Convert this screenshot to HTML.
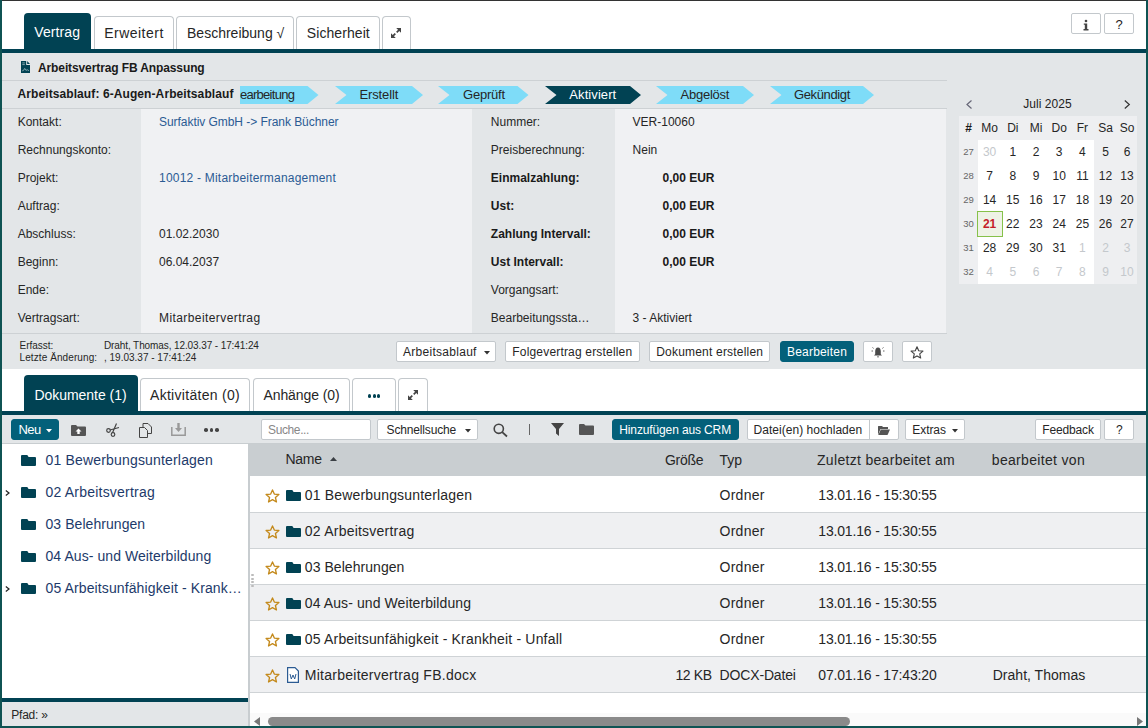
<!DOCTYPE html><html><head><meta charset="utf-8"><style>*{margin:0;padding:0;box-sizing:border-box}
html,body{width:1148px;height:728px;overflow:hidden;background:#fff;font-family:"Liberation Sans", sans-serif}
body>div{position:absolute}
.t{white-space:nowrap}
svg{position:absolute;overflow:visible}
</style></head><body>
<div style="left:0px;top:0px;width:1148px;height:728px;background:#fff"></div>
<div style="left:24px;top:13px;width:67px;height:36px;background:#014253;border-radius:4px 4px 0 0"></div>
<div class="t" style="left:34.20px;top:25.15px;font-size:14px;line-height:14px;color:#fff;font-weight:normal;letter-spacing:0.123px;">Vertrag</div>
<div style="left:94px;top:16px;width:80px;height:33px;background:#fff;border:1px solid #c3c8cc;border-bottom:none;border-radius:4px 4px 0 0"></div>
<div class="t" style="left:104.20px;top:26.15px;font-size:14px;line-height:14px;color:#262626;font-weight:normal;letter-spacing:0.485px;">Erweitert</div>
<div style="left:176px;top:16px;width:118px;height:33px;background:#fff;border:1px solid #c3c8cc;border-bottom:none;border-radius:4px 4px 0 0"></div>
<div class="t" style="left:187.00px;top:26.15px;font-size:14px;line-height:14px;color:#262626;font-weight:normal;letter-spacing:0.008px;">Beschreibung √</div>
<div style="left:296px;top:16px;width:84px;height:33px;background:#fff;border:1px solid #c3c8cc;border-bottom:none;border-radius:4px 4px 0 0"></div>
<div class="t" style="left:306.80px;top:26.15px;font-size:14px;line-height:14px;color:#262626;font-weight:normal;letter-spacing:0.075px;">Sicherheit</div>
<div style="left:382px;top:16px;width:29px;height:33px;background:#fff;border:1px solid #c3c8cc;border-bottom:none;border-radius:4px 4px 0 0"></div>
<svg style="left:391px;top:28px" width="10" height="10" viewBox="0 0 10 10"><path d="M1.8 8.2 L4.3 5.7 M5.7 4.3 L8.2 1.8" stroke="#444" stroke-width="1.7"/><path d="M0 10 L0 5.2 L4.8 10 Z M10 0 L10 4.8 L5.2 0 Z" fill="#444"/></svg>
<div style="left:1071px;top:13px;width:30px;height:21px;background:#fff;border:1px solid #c3c8cc;border-radius:2px"></div>
<svg style="left:1083px;top:19px" width="6" height="12" viewBox="0 0 6 12"><circle cx="3" cy="2" r="1.3" fill="#444"/><path d="M0.8 4.5 H4.2 V10 H5.5 V11.5 H0.5 V10 H1.8 V5.7 H0.8 Z" fill="#444"/></svg>
<div style="left:1104px;top:13px;width:30px;height:21px;background:#fff;border:1px solid #c3c8cc;border-radius:2px"></div>
<div class="t" style="left:1115.50px;top:17.50px;font-size:13px;line-height:13px;color:#222;font-weight:normal;">?</div>
<div style="left:2px;top:49px;width:1144px;height:4px;background:#014253"></div>
<div style="left:2px;top:53px;width:1144px;height:316px;background:#e3e6e8"></div>
<svg style="left:21px;top:61px" width="9" height="12" viewBox="0 0 9 12"><path d="M0 0 H5.2 V3.6 Q5.2 4.1 5.7 4.1 H9 V12 H0 Z" fill="#014253"/><path d="M6.2 0 L9 3.1 H6.2 Z" fill="#014253"/><path d="M1.3 1.9 H3.8 M1.3 3.6 H3.8" stroke="#8fb0b8" stroke-width="0.9"/><path d="M1.2 9.9 L2.6 9.3 L3.7 7.4 L4.9 9.3 L6.4 8.8 L7.9 9.7" stroke="#8fb0b8" stroke-width="0.9" fill="none"/></svg>
<div class="t" style="left:38.00px;top:61.84px;font-size:12px;line-height:12px;color:#1a1a1a;font-weight:bold;letter-spacing:-0.112px;">Arbeitsvertrag FB Anpassung</div>
<div style="left:2px;top:80px;width:945px;height:1px;background:#cdd1d4"></div>
<svg style="left:0;top:0" width="1148" height="728"><polygon points="240,86 307.5,86 318.5,95 307.5,104 240,104" fill="#7edcf8"/></svg>
<div class="t" style="left:232.00px;top:88.00px;font-size:13px;line-height:13px;color:#262626;font-weight:normal;letter-spacing:-0.719px;">Bearbeitung</div>
<svg style="left:0;top:0" width="1148" height="728"><polygon points="335,86 412,86 423,95 412,104 335,104 346.5,95" fill="#7edcf8"/></svg>
<div class="t" style="left:359.50px;top:88.00px;font-size:13px;line-height:13px;color:#262626;font-weight:normal;letter-spacing:-0.129px;">Erstellt</div>
<svg style="left:0;top:0" width="1148" height="728"><polygon points="438,86 517.5,86 528.5,95 517.5,104 438,104 449.5,95" fill="#7edcf8"/></svg>
<div class="t" style="left:463.00px;top:88.00px;font-size:13px;line-height:13px;color:#262626;font-weight:normal;letter-spacing:-0.222px;">Geprüft</div>
<svg style="left:0;top:0" width="1148" height="728"><polygon points="545,86 630,86 641,95 630,104 545,104 556.5,95" fill="#014253"/></svg>
<div class="t" style="left:569.30px;top:88.00px;font-size:13px;line-height:13px;color:#fff;font-weight:normal;letter-spacing:0.086px;">Aktiviert</div>
<svg style="left:0;top:0" width="1148" height="728"><polygon points="656,86 743,86 754,95 743,104 656,104 667.5,95" fill="#7edcf8"/></svg>
<div class="t" style="left:680.50px;top:88.00px;font-size:13px;line-height:13px;color:#262626;font-weight:normal;letter-spacing:-0.236px;">Abgelöst</div>
<svg style="left:0;top:0" width="1148" height="728"><polygon points="770,86 863,86 874,95 863,104 770,104 781.5,95" fill="#7edcf8"/></svg>
<div class="t" style="left:793.90px;top:88.00px;font-size:13px;line-height:13px;color:#262626;font-weight:normal;letter-spacing:-0.351px;">Gekündigt</div>
<div style="left:2px;top:82px;width:238px;height:24px;background:#e3e6e8"></div>
<div class="t" style="left:17.50px;top:88.24px;font-size:12px;line-height:12px;color:#1a1a1a;font-weight:bold;letter-spacing:0.092px;">Arbeitsablauf: 6-Augen-Arbeitsablauf</div>
<div style="left:2px;top:108px;width:945px;height:1px;background:#cdd1d4"></div>
<div style="left:141px;top:109px;width:331px;height:224px;background:#f0f1f3"></div>
<div style="left:615px;top:109px;width:331px;height:224px;background:#f0f1f3"></div>
<div style="left:2px;top:333px;width:945px;height:1px;background:#cdd1d4"></div>
<div class="t" style="left:17.70px;top:115.84px;font-size:12px;line-height:12px;color:#262626;font-weight:normal;">Kontakt:</div>
<div class="t" style="left:17.70px;top:143.84px;font-size:12px;line-height:12px;color:#262626;font-weight:normal;">Rechnungskonto:</div>
<div class="t" style="left:17.70px;top:171.84px;font-size:12px;line-height:12px;color:#262626;font-weight:normal;">Projekt:</div>
<div class="t" style="left:17.70px;top:199.84px;font-size:12px;line-height:12px;color:#262626;font-weight:normal;">Auftrag:</div>
<div class="t" style="left:17.70px;top:227.84px;font-size:12px;line-height:12px;color:#262626;font-weight:normal;">Abschluss:</div>
<div class="t" style="left:17.70px;top:255.84px;font-size:12px;line-height:12px;color:#262626;font-weight:normal;">Beginn:</div>
<div class="t" style="left:17.70px;top:283.84px;font-size:12px;line-height:12px;color:#262626;font-weight:normal;">Ende:</div>
<div class="t" style="left:17.70px;top:311.84px;font-size:12px;line-height:12px;color:#262626;font-weight:normal;">Vertragsart:</div>
<div class="t" style="left:159.00px;top:115.84px;font-size:12px;line-height:12px;color:#2b5b93;font-weight:normal;letter-spacing:-0.050px;">Surfaktiv GmbH -&gt; Frank Büchner</div>
<div class="t" style="left:159.00px;top:171.84px;font-size:12px;line-height:12px;color:#2b5b93;font-weight:normal;letter-spacing:0.215px;">10012 - Mitarbeitermanagement</div>
<div class="t" style="left:159.00px;top:227.84px;font-size:12px;line-height:12px;color:#262626;font-weight:normal;">01.02.2030</div>
<div class="t" style="left:159.00px;top:255.84px;font-size:12px;line-height:12px;color:#262626;font-weight:normal;">06.04.2037</div>
<div class="t" style="left:159.00px;top:311.84px;font-size:12px;line-height:12px;color:#262626;font-weight:normal;letter-spacing:0.415px;">Mitarbeitervertrag</div>
<div class="t" style="left:490.80px;top:115.84px;font-size:12px;line-height:12px;color:#262626;font-weight:normal;">Nummer:</div>
<div class="t" style="left:490.80px;top:143.84px;font-size:12px;line-height:12px;color:#262626;font-weight:normal;">Preisberechnung:</div>
<div class="t" style="left:490.80px;top:171.84px;font-size:12px;line-height:12px;color:#1a1a1a;font-weight:bold;">Einmalzahlung:</div>
<div class="t" style="left:490.80px;top:199.84px;font-size:12px;line-height:12px;color:#1a1a1a;font-weight:bold;">Ust:</div>
<div class="t" style="left:490.80px;top:227.84px;font-size:12px;line-height:12px;color:#1a1a1a;font-weight:bold;">Zahlung Intervall:</div>
<div class="t" style="left:490.80px;top:255.84px;font-size:12px;line-height:12px;color:#1a1a1a;font-weight:bold;">Ust Intervall:</div>
<div class="t" style="left:490.80px;top:283.84px;font-size:12px;line-height:12px;color:#262626;font-weight:normal;">Vorgangsart:</div>
<div class="t" style="left:490.80px;top:311.84px;font-size:12px;line-height:12px;color:#262626;font-weight:normal;">Bearbeitungssta…</div>
<div class="t" style="left:632.60px;top:115.84px;font-size:12px;line-height:12px;color:#262626;font-weight:normal;">VER-10060</div>
<div class="t" style="left:632.60px;top:143.84px;font-size:12px;line-height:12px;color:#262626;font-weight:normal;">Nein</div>
<div class="t" style="left:662.50px;top:171.84px;font-size:12px;line-height:12px;color:#1a1a1a;font-weight:bold;">0,00 EUR</div>
<div class="t" style="left:662.50px;top:199.84px;font-size:12px;line-height:12px;color:#1a1a1a;font-weight:bold;">0,00 EUR</div>
<div class="t" style="left:662.50px;top:227.84px;font-size:12px;line-height:12px;color:#1a1a1a;font-weight:bold;">0,00 EUR</div>
<div class="t" style="left:662.50px;top:255.84px;font-size:12px;line-height:12px;color:#1a1a1a;font-weight:bold;">0,00 EUR</div>
<div class="t" style="left:632.60px;top:311.84px;font-size:12px;line-height:12px;color:#262626;font-weight:normal;">3 - Aktiviert</div>
<div class="t" style="left:19.50px;top:340.54px;font-size:10px;line-height:10px;color:#262626;font-weight:normal;">Erfasst:</div>
<div class="t" style="left:19.50px;top:352.54px;font-size:10px;line-height:10px;color:#262626;font-weight:normal;letter-spacing:0.096px;">Letzte Änderung:</div>
<div class="t" style="left:104.00px;top:340.54px;font-size:10px;line-height:10px;color:#262626;font-weight:normal;letter-spacing:-0.101px;">Draht, Thomas, 12.03.37 - 17:41:24</div>
<div class="t" style="left:104.00px;top:352.54px;font-size:10px;line-height:10px;color:#262626;font-weight:normal;">, 19.03.37 - 17:41:24</div>
<div style="left:396px;top:341px;width:100px;height:21px;background:#fff;border:1px solid #c3c8cc;border-radius:2px"></div>
<div class="t" style="left:403.00px;top:345.84px;font-size:12px;line-height:12px;color:#262626;font-weight:normal;letter-spacing:0.281px;">Arbeitsablauf</div>
<svg style="left:483.5px;top:351px" width="6" height="4"><polygon points="0,0 6,0 3.0,3.5" fill="#333"/></svg>
<div style="left:505px;top:341px;width:135px;height:21px;background:#fff;border:1px solid #c3c8cc;border-radius:2px"></div>
<div class="t" style="left:512.30px;top:345.84px;font-size:12px;line-height:12px;color:#262626;font-weight:normal;letter-spacing:0.179px;">Folgevertrag erstellen</div>
<div style="left:649px;top:341px;width:121px;height:21px;background:#fff;border:1px solid #c3c8cc;border-radius:2px"></div>
<div class="t" style="left:656.20px;top:345.84px;font-size:12px;line-height:12px;color:#262626;font-weight:normal;letter-spacing:0.201px;">Dokument erstellen</div>
<div style="left:780px;top:341px;width:74px;height:21px;background:#03607a;border:1px solid #03607a;border-radius:3px"></div>
<div class="t" style="left:787.00px;top:345.84px;font-size:12px;line-height:12px;color:#fff;font-weight:normal;letter-spacing:0.196px;">Bearbeiten</div>
<div style="left:863px;top:341px;width:30px;height:21px;background:#fff;border:1px solid #c3c8cc;border-radius:2px"></div>
<svg style="left:871px;top:346px" width="14" height="13" viewBox="0 0 14 13"><path d="M7 1.5 C5 1.5 4.2 3.2 4.2 5.5 L4.2 8.3 L3 9.6 H11 L9.8 8.3 L9.8 5.5 C9.8 3.2 9 1.5 7 1.5 Z" fill="#4a4a4a"/><path d="M6 10.6 H8 V11.3 H6 Z" fill="#4a4a4a"/><path d="M1.5 1.5 L2.6 2.4 M12.5 1.5 L11.4 2.4 M0.5 5 H2 M12 5 H13.5" stroke="#555" stroke-width="0.9"/></svg>
<div style="left:902px;top:341px;width:30px;height:21px;background:#fff;border:1px solid #c3c8cc;border-radius:2px"></div>
<svg style="left:910px;top:345.5px" width="14" height="13" viewBox="0 0 24 23"><path d="M12 1.5 L15 8.3 L22.5 9 L16.8 14 L18.5 21.3 L12 17.5 L5.5 21.3 L7.2 14 L1.5 9 L9 8.3 Z" fill="none" stroke="#444" stroke-width="2" stroke-linejoin="round"/></svg>
<svg style="left:966px;top:100px" width="7" height="10"><path d="M5.5 0.5 L1 4.5 L5.5 8.5" fill="none" stroke="#667" stroke-width="1.2"/></svg>
<svg style="left:1124px;top:100px" width="7" height="10"><path d="M0.8 0.5 L5.3 4.5 L0.8 8.5" fill="none" stroke="#333" stroke-width="1.2"/></svg>
<div class="t" style="left:1023.30px;top:97.84px;font-size:12px;line-height:12px;color:#222;font-weight:normal;letter-spacing:0.029px;">Juli 2025</div>
<div style="left:959px;top:116px;width:178px;height:168px;background:#eeeff1"></div>
<div style="left:978px;top:140px;width:116px;height:144px;background:#fff"></div>
<div class="t" style="left:938.50px;top:121.54px;font-size:12px;line-height:12px;color:#1a1a1a;font-weight:bold;width:60px;text-align:center;">#</div>
<div class="t" style="left:959.60px;top:121.54px;font-size:12px;line-height:12px;color:#262626;font-weight:normal;width:60px;text-align:center;">Mo</div>
<div class="t" style="left:982.80px;top:121.54px;font-size:12px;line-height:12px;color:#262626;font-weight:normal;width:60px;text-align:center;">Di</div>
<div class="t" style="left:1006.00px;top:121.54px;font-size:12px;line-height:12px;color:#262626;font-weight:normal;width:60px;text-align:center;">Mi</div>
<div class="t" style="left:1029.20px;top:121.54px;font-size:12px;line-height:12px;color:#262626;font-weight:normal;width:60px;text-align:center;">Do</div>
<div class="t" style="left:1052.40px;top:121.54px;font-size:12px;line-height:12px;color:#262626;font-weight:normal;width:60px;text-align:center;">Fr</div>
<div class="t" style="left:1075.50px;top:121.54px;font-size:12px;line-height:12px;color:#262626;font-weight:normal;width:60px;text-align:center;">Sa</div>
<div class="t" style="left:1097.00px;top:121.54px;font-size:12px;line-height:12px;color:#262626;font-weight:normal;width:60px;text-align:center;">So</div>
<div style="left:977px;top:211px;width:26px;height:26px;background:#eef2e6;border:1px solid #86c14a"></div>
<div class="t" style="left:938.50px;top:147.46px;font-size:9.5px;line-height:9.5px;color:#666;font-weight:normal;width:60px;text-align:center;">27</div>
<div class="t" style="left:959.60px;top:145.84px;font-size:12px;line-height:12px;color:#c4c8cc;font-weight:normal;width:60px;text-align:center;">30</div>
<div class="t" style="left:982.80px;top:145.84px;font-size:12px;line-height:12px;color:#262626;font-weight:normal;width:60px;text-align:center;">1</div>
<div class="t" style="left:1006.00px;top:145.84px;font-size:12px;line-height:12px;color:#262626;font-weight:normal;width:60px;text-align:center;">2</div>
<div class="t" style="left:1029.20px;top:145.84px;font-size:12px;line-height:12px;color:#262626;font-weight:normal;width:60px;text-align:center;">3</div>
<div class="t" style="left:1052.40px;top:145.84px;font-size:12px;line-height:12px;color:#262626;font-weight:normal;width:60px;text-align:center;">4</div>
<div class="t" style="left:1075.50px;top:145.84px;font-size:12px;line-height:12px;color:#262626;font-weight:normal;width:60px;text-align:center;">5</div>
<div class="t" style="left:1097.00px;top:145.84px;font-size:12px;line-height:12px;color:#262626;font-weight:normal;width:60px;text-align:center;">6</div>
<div class="t" style="left:938.50px;top:171.46px;font-size:9.5px;line-height:9.5px;color:#666;font-weight:normal;width:60px;text-align:center;">28</div>
<div class="t" style="left:959.60px;top:169.84px;font-size:12px;line-height:12px;color:#262626;font-weight:normal;width:60px;text-align:center;">7</div>
<div class="t" style="left:982.80px;top:169.84px;font-size:12px;line-height:12px;color:#262626;font-weight:normal;width:60px;text-align:center;">8</div>
<div class="t" style="left:1006.00px;top:169.84px;font-size:12px;line-height:12px;color:#262626;font-weight:normal;width:60px;text-align:center;">9</div>
<div class="t" style="left:1029.20px;top:169.84px;font-size:12px;line-height:12px;color:#262626;font-weight:normal;width:60px;text-align:center;">10</div>
<div class="t" style="left:1052.40px;top:169.84px;font-size:12px;line-height:12px;color:#262626;font-weight:normal;width:60px;text-align:center;">11</div>
<div class="t" style="left:1075.50px;top:169.84px;font-size:12px;line-height:12px;color:#262626;font-weight:normal;width:60px;text-align:center;">12</div>
<div class="t" style="left:1097.00px;top:169.84px;font-size:12px;line-height:12px;color:#262626;font-weight:normal;width:60px;text-align:center;">13</div>
<div class="t" style="left:938.50px;top:195.46px;font-size:9.5px;line-height:9.5px;color:#666;font-weight:normal;width:60px;text-align:center;">29</div>
<div class="t" style="left:959.60px;top:193.84px;font-size:12px;line-height:12px;color:#262626;font-weight:normal;width:60px;text-align:center;">14</div>
<div class="t" style="left:982.80px;top:193.84px;font-size:12px;line-height:12px;color:#262626;font-weight:normal;width:60px;text-align:center;">15</div>
<div class="t" style="left:1006.00px;top:193.84px;font-size:12px;line-height:12px;color:#262626;font-weight:normal;width:60px;text-align:center;">16</div>
<div class="t" style="left:1029.20px;top:193.84px;font-size:12px;line-height:12px;color:#262626;font-weight:normal;width:60px;text-align:center;">17</div>
<div class="t" style="left:1052.40px;top:193.84px;font-size:12px;line-height:12px;color:#262626;font-weight:normal;width:60px;text-align:center;">18</div>
<div class="t" style="left:1075.50px;top:193.84px;font-size:12px;line-height:12px;color:#262626;font-weight:normal;width:60px;text-align:center;">19</div>
<div class="t" style="left:1097.00px;top:193.84px;font-size:12px;line-height:12px;color:#262626;font-weight:normal;width:60px;text-align:center;">20</div>
<div class="t" style="left:938.50px;top:219.46px;font-size:9.5px;line-height:9.5px;color:#666;font-weight:normal;width:60px;text-align:center;">30</div>
<div class="t" style="left:959.60px;top:217.84px;font-size:12px;line-height:12px;color:#c41d2a;font-weight:bold;width:60px;text-align:center;">21</div>
<div class="t" style="left:982.80px;top:217.84px;font-size:12px;line-height:12px;color:#262626;font-weight:normal;width:60px;text-align:center;">22</div>
<div class="t" style="left:1006.00px;top:217.84px;font-size:12px;line-height:12px;color:#262626;font-weight:normal;width:60px;text-align:center;">23</div>
<div class="t" style="left:1029.20px;top:217.84px;font-size:12px;line-height:12px;color:#262626;font-weight:normal;width:60px;text-align:center;">24</div>
<div class="t" style="left:1052.40px;top:217.84px;font-size:12px;line-height:12px;color:#262626;font-weight:normal;width:60px;text-align:center;">25</div>
<div class="t" style="left:1075.50px;top:217.84px;font-size:12px;line-height:12px;color:#262626;font-weight:normal;width:60px;text-align:center;">26</div>
<div class="t" style="left:1097.00px;top:217.84px;font-size:12px;line-height:12px;color:#262626;font-weight:normal;width:60px;text-align:center;">27</div>
<div class="t" style="left:938.50px;top:243.46px;font-size:9.5px;line-height:9.5px;color:#666;font-weight:normal;width:60px;text-align:center;">31</div>
<div class="t" style="left:959.60px;top:241.84px;font-size:12px;line-height:12px;color:#262626;font-weight:normal;width:60px;text-align:center;">28</div>
<div class="t" style="left:982.80px;top:241.84px;font-size:12px;line-height:12px;color:#262626;font-weight:normal;width:60px;text-align:center;">29</div>
<div class="t" style="left:1006.00px;top:241.84px;font-size:12px;line-height:12px;color:#262626;font-weight:normal;width:60px;text-align:center;">30</div>
<div class="t" style="left:1029.20px;top:241.84px;font-size:12px;line-height:12px;color:#262626;font-weight:normal;width:60px;text-align:center;">31</div>
<div class="t" style="left:1052.40px;top:241.84px;font-size:12px;line-height:12px;color:#c4c8cc;font-weight:normal;width:60px;text-align:center;">1</div>
<div class="t" style="left:1075.50px;top:241.84px;font-size:12px;line-height:12px;color:#c4c8cc;font-weight:normal;width:60px;text-align:center;">2</div>
<div class="t" style="left:1097.00px;top:241.84px;font-size:12px;line-height:12px;color:#c4c8cc;font-weight:normal;width:60px;text-align:center;">3</div>
<div class="t" style="left:938.50px;top:267.46px;font-size:9.5px;line-height:9.5px;color:#666;font-weight:normal;width:60px;text-align:center;">32</div>
<div class="t" style="left:959.60px;top:265.84px;font-size:12px;line-height:12px;color:#c4c8cc;font-weight:normal;width:60px;text-align:center;">4</div>
<div class="t" style="left:982.80px;top:265.84px;font-size:12px;line-height:12px;color:#c4c8cc;font-weight:normal;width:60px;text-align:center;">5</div>
<div class="t" style="left:1006.00px;top:265.84px;font-size:12px;line-height:12px;color:#c4c8cc;font-weight:normal;width:60px;text-align:center;">6</div>
<div class="t" style="left:1029.20px;top:265.84px;font-size:12px;line-height:12px;color:#c4c8cc;font-weight:normal;width:60px;text-align:center;">7</div>
<div class="t" style="left:1052.40px;top:265.84px;font-size:12px;line-height:12px;color:#c4c8cc;font-weight:normal;width:60px;text-align:center;">8</div>
<div class="t" style="left:1075.50px;top:265.84px;font-size:12px;line-height:12px;color:#c4c8cc;font-weight:normal;width:60px;text-align:center;">9</div>
<div class="t" style="left:1097.00px;top:265.84px;font-size:12px;line-height:12px;color:#c4c8cc;font-weight:normal;width:60px;text-align:center;">10</div>
<div style="left:24px;top:375px;width:114px;height:36px;background:#014253;border-radius:4px 4px 0 0"></div>
<div class="t" style="left:34.50px;top:388.15px;font-size:14px;line-height:14px;color:#fff;font-weight:normal;letter-spacing:-0.046px;">Dokumente (1)</div>
<div style="left:140px;top:378px;width:110px;height:33px;background:#fff;border:1px solid #c3c8cc;border-bottom:none;border-radius:4px 4px 0 0"></div>
<div class="t" style="left:150.00px;top:388.15px;font-size:14px;line-height:14px;color:#262626;font-weight:normal;letter-spacing:0.294px;">Aktivitäten (0)</div>
<div style="left:253px;top:378px;width:97px;height:33px;background:#fff;border:1px solid #c3c8cc;border-bottom:none;border-radius:4px 4px 0 0"></div>
<div class="t" style="left:263.50px;top:388.15px;font-size:14px;line-height:14px;color:#262626;font-weight:normal;letter-spacing:-0.096px;">Anhänge (0)</div>
<div style="left:352px;top:378px;width:44px;height:33px;background:#fff;border:1px solid #c3c8cc;border-bottom:none;border-radius:4px 4px 0 0"></div>
<div style="left:367.9px;top:394.2px;width:3.4px;height:3.4px;background:#014253;border-radius:50%"></div>
<div style="left:372.5px;top:394.2px;width:3.4px;height:3.4px;background:#014253;border-radius:50%"></div>
<div style="left:377.09999999999997px;top:394.2px;width:3.4px;height:3.4px;background:#014253;border-radius:50%"></div>
<div style="left:398px;top:378px;width:30px;height:33px;background:#fff;border:1px solid #c3c8cc;border-bottom:none;border-radius:4px 4px 0 0"></div>
<svg style="left:408px;top:390px" width="10" height="10" viewBox="0 0 10 10"><path d="M1.8 8.2 L4.3 5.7 M5.7 4.3 L8.2 1.8" stroke="#444" stroke-width="1.7"/><path d="M0 10 L0 5.2 L4.8 10 Z M10 0 L10 4.8 L5.2 0 Z" fill="#444"/></svg>
<div style="left:2px;top:411px;width:1144px;height:4px;background:#014253"></div>
<div style="left:2px;top:415px;width:1144px;height:28px;background:#e3e6e8"></div>
<div style="left:2px;top:443px;width:1144px;height:1px;background:#c8cdd0"></div>
<div style="left:11px;top:419px;width:48px;height:21px;background:#03607a;border:1px solid #03607a;border-radius:3px"></div>
<div class="t" style="left:18.50px;top:423.00px;font-size:13px;line-height:13px;color:#fff;font-weight:normal;letter-spacing:-0.616px;">Neu</div>
<svg style="left:45.5px;top:429px" width="6" height="4"><polygon points="0,0 6,0 3.0,3.5" fill="#fff"/></svg>
<svg style="left:71px;top:425px" width="15" height="11" viewBox="0 0 15 11"><path d="M0 1 Q0 0 1 0 H5 L6.5 1.5 H14 Q15 1.5 15 2.5 V10 Q15 11 14 11 H1 Q0 11 0 10 Z" fill="#555"/><path d="M7.5 3.5 L10.5 6.5 H8.7 V9 H6.3 V6.5 H4.5 Z" fill="#fff"/></svg>
<svg style="left:106px;top:423px" width="14" height="14" viewBox="0 0 14 14"><circle cx="2.5" cy="7.5" r="1.8" fill="none" stroke="#444" stroke-width="1.2"/><circle cx="7" cy="11.5" r="1.8" fill="none" stroke="#444" stroke-width="1.2"/><path d="M4 7 L13 4.5 M6.5 9.7 L10.5 0.5" stroke="#444" stroke-width="1.2"/></svg>
<svg style="left:139px;top:423px" width="13" height="15" viewBox="0 0 13 15"><path d="M4 0.5 H9 L12.5 4 V10.5 H4 Z" fill="#e3e6e8" stroke="#444" stroke-width="1"/><path d="M0.5 4.5 H5.5 L8.5 7.5 V14.5 H0.5 Z" fill="#e3e6e8" stroke="#444" stroke-width="1"/></svg>
<svg style="left:171px;top:423px" width="15" height="13" viewBox="0 0 15 13"><path d="M0.8 4 V12.2 H14.2 V4" fill="none" stroke="#999" stroke-width="1.5"/><path d="M6.3 0 H8.7 V5 H11 L7.5 9 L4 5 H6.3 Z" fill="#999"/></svg>
<div style="left:204.0px;top:428px;width:3.5px;height:3.5px;background:#444;border-radius:50%"></div>
<div style="left:209.5px;top:428px;width:3.5px;height:3.5px;background:#444;border-radius:50%"></div>
<div style="left:215.0px;top:428px;width:3.5px;height:3.5px;background:#444;border-radius:50%"></div>
<div style="left:261px;top:419px;width:110px;height:21px;background:#fff;border:1px solid #c3c8cc;border-radius:2px"></div>
<div class="t" style="left:268.00px;top:424.34px;font-size:12px;line-height:12px;color:#888;font-weight:normal;letter-spacing:-0.378px;">Suche...</div>
<div style="left:377px;top:419px;width:101px;height:21px;background:#fff;border:1px solid #c3c8cc;border-radius:2px"></div>
<div class="t" style="left:386.60px;top:424.34px;font-size:12px;line-height:12px;color:#262626;font-weight:normal;letter-spacing:-0.165px;">Schnellsuche</div>
<svg style="left:464.8px;top:429px" width="6" height="4"><polygon points="0,0 6,0 3.0,3.5" fill="#333"/></svg>
<svg style="left:493px;top:423px" width="15" height="14" viewBox="0 0 15 14"><circle cx="5.8" cy="5.8" r="4.6" fill="none" stroke="#444" stroke-width="1.6"/><path d="M9.2 9.2 L14 13.5" stroke="#444" stroke-width="1.8"/></svg>
<div style="left:529px;top:424px;width:1px;height:11px;background:#666"></div>
<svg style="left:551px;top:423px" width="13" height="13" viewBox="0 0 13 13"><path d="M0 0 H13 L8 6 V13 L5 10.5 V6 Z" fill="#444"/></svg>
<svg style="left:579px;top:424px" width="15" height="11" viewBox="0 0 15 11"><path d="M0 1 Q0 0 1 0 H5 L6.5 1.5 H14 Q15 1.5 15 2.5 V10 Q15 11 14 11 H1 Q0 11 0 10 Z" fill="#555"/></svg>
<div style="left:612px;top:419px;width:127px;height:21px;background:#03607a;border:1px solid #03607a;border-radius:3px"></div>
<div class="t" style="left:619.30px;top:424.34px;font-size:12px;line-height:12px;color:#fff;font-weight:normal;letter-spacing:-0.131px;">Hinzufügen aus CRM</div>
<div style="left:747px;top:419px;width:152px;height:21px;background:#fff;border:1px solid #c3c8cc;border-radius:2px"></div>
<div style="left:869px;top:420px;width:1px;height:19px;background:#c3c8cc"></div>
<div class="t" style="left:753.60px;top:424.34px;font-size:12px;line-height:12px;color:#262626;font-weight:normal;letter-spacing:0.028px;">Datei(en) hochladen</div>
<svg style="left:878px;top:426px" width="12" height="9" viewBox="0 0 12 9"><path d="M0 0.5 Q0 0 0.5 0 H4 L5 1 H10 V3 H2.5 L0 9 Z" fill="#555"/><path d="M2.8 3.5 H12 L9.5 9 H0.3 Z" fill="#555"/></svg>
<div style="left:905px;top:419px;width:60px;height:21px;background:#fff;border:1px solid #c3c8cc;border-radius:2px"></div>
<div class="t" style="left:912.30px;top:424.34px;font-size:12px;line-height:12px;color:#262626;font-weight:normal;letter-spacing:-0.085px;">Extras</div>
<svg style="left:952.4px;top:429px" width="6" height="4"><polygon points="0,0 6,0 3.0,3.5" fill="#333"/></svg>
<div style="left:1035px;top:419px;width:66px;height:21px;background:#fff;border:1px solid #c3c8cc;border-radius:2px"></div>
<div class="t" style="left:1042.30px;top:424.34px;font-size:12px;line-height:12px;color:#262626;font-weight:normal;letter-spacing:-0.150px;">Feedback</div>
<div style="left:1104px;top:419px;width:30px;height:21px;background:#fff;border:1px solid #c3c8cc;border-radius:2px"></div>
<div class="t" style="left:1116.00px;top:424.34px;font-size:12px;line-height:12px;color:#262626;font-weight:normal;">?</div>
<div style="left:2px;top:444px;width:246px;height:254px;background:#fff"></div>
<svg style="left:21px;top:454.7px" width="15" height="11" viewBox="0 0 15 11" preserveAspectRatio="none"><path d="M0 1 Q0 0 1 0 H6.3 L7.6 2 H14 Q15 2 15 3 V10 Q15 11 14 11 H1 Q0 11 0 10 Z" fill="#014253"/></svg>
<div class="t" style="left:45.50px;top:453.35px;font-size:14px;line-height:14px;color:#1d3a6a;font-weight:normal;letter-spacing:0.176px;">01 Bewerbungsunterlagen</div>
<svg style="left:21px;top:486.7px" width="15" height="11" viewBox="0 0 15 11" preserveAspectRatio="none"><path d="M0 1 Q0 0 1 0 H6.3 L7.6 2 H14 Q15 2 15 3 V10 Q15 11 14 11 H1 Q0 11 0 10 Z" fill="#014253"/></svg>
<div class="t" style="left:45.50px;top:485.35px;font-size:14px;line-height:14px;color:#1d3a6a;font-weight:normal;letter-spacing:0.211px;">02 Arbeitsvertrag</div>
<svg style="left:5px;top:489.5px" width="5" height="6"><path d="M0.8 0.5 L4 3 L0.8 5.5" fill="none" stroke="#222" stroke-width="1.2"/></svg>
<svg style="left:21px;top:518.7px" width="15" height="11" viewBox="0 0 15 11" preserveAspectRatio="none"><path d="M0 1 Q0 0 1 0 H6.3 L7.6 2 H14 Q15 2 15 3 V10 Q15 11 14 11 H1 Q0 11 0 10 Z" fill="#014253"/></svg>
<div class="t" style="left:45.50px;top:517.35px;font-size:14px;line-height:14px;color:#1d3a6a;font-weight:normal;letter-spacing:0.060px;">03 Belehrungen</div>
<svg style="left:21px;top:550.7px" width="15" height="11" viewBox="0 0 15 11" preserveAspectRatio="none"><path d="M0 1 Q0 0 1 0 H6.3 L7.6 2 H14 Q15 2 15 3 V10 Q15 11 14 11 H1 Q0 11 0 10 Z" fill="#014253"/></svg>
<div class="t" style="left:45.50px;top:549.35px;font-size:14px;line-height:14px;color:#1d3a6a;font-weight:normal;letter-spacing:0.071px;">04 Aus- und Weiterbildung</div>
<svg style="left:21px;top:582.7px" width="15" height="11" viewBox="0 0 15 11" preserveAspectRatio="none"><path d="M0 1 Q0 0 1 0 H6.3 L7.6 2 H14 Q15 2 15 3 V10 Q15 11 14 11 H1 Q0 11 0 10 Z" fill="#014253"/></svg>
<div class="t" style="left:45.50px;top:581.35px;font-size:14px;line-height:14px;color:#1d3a6a;font-weight:normal;letter-spacing:0.115px;">05 Arbeitsunfähigkeit - Krank…</div>
<svg style="left:5px;top:585.5px" width="5" height="6"><path d="M0.8 0.5 L4 3 L0.8 5.5" fill="none" stroke="#222" stroke-width="1.2"/></svg>
<div style="left:248px;top:444px;width:2px;height:282px;background:#c8cdd0"></div>
<div style="left:2px;top:698px;width:246px;height:4px;background:#014253"></div>
<div style="left:2px;top:702px;width:246px;height:24px;background:#e3e6e8"></div>
<div class="t" style="left:11.30px;top:709.44px;font-size:12px;line-height:12px;color:#262626;font-weight:normal;letter-spacing:-0.232px;">Pfad: »</div>
<div style="left:250px;top:444px;width:896px;height:32px;background:#c9ced1"></div>
<div class="t" style="left:285.60px;top:452.15px;font-size:14px;line-height:14px;color:#262626;font-weight:normal;letter-spacing:-0.336px;">Name</div>
<svg style="left:330px;top:457px" width="7" height="4"><polygon points="0,4 7,4 3.5,0" fill="#3a3f44"/></svg>
<div class="t" style="left:664.90px;top:452.65px;font-size:14px;line-height:14px;color:#262626;font-weight:normal;letter-spacing:-0.255px;">Größe</div>
<div class="t" style="left:719.60px;top:452.65px;font-size:14px;line-height:14px;color:#262626;font-weight:normal;">Typ</div>
<div class="t" style="left:817.00px;top:452.65px;font-size:14px;line-height:14px;color:#262626;font-weight:normal;letter-spacing:0.309px;">Zuletzt bearbeitet am</div>
<div class="t" style="left:991.80px;top:452.65px;font-size:14px;line-height:14px;color:#262626;font-weight:normal;letter-spacing:0.319px;">bearbeitet von</div>
<div style="left:250px;top:476px;width:896px;height:36px;background:#fff"></div>
<div style="left:250px;top:512px;width:896px;height:1px;background:#cfd3d6;z-index:1"></div>
<svg style="left:265px;top:489px" width="15" height="14" viewBox="0 0 24 23"><path d="M12 1.5 L15 8.3 L22.5 9 L16.8 14 L18.5 21.3 L12 17.5 L5.5 21.3 L7.2 14 L1.5 9 L9 8.3 Z" fill="none" stroke="#c48a1c" stroke-width="2.2" stroke-linejoin="round"/></svg>
<svg style="left:286px;top:490px" width="15" height="11" viewBox="0 0 15 11" preserveAspectRatio="none"><path d="M0 1 Q0 0 1 0 H6.3 L7.6 2 H14 Q15 2 15 3 V10 Q15 11 14 11 H1 Q0 11 0 10 Z" fill="#014253"/></svg>
<div class="t" style="left:304.80px;top:488.15px;font-size:14px;line-height:14px;color:#262626;font-weight:normal;letter-spacing:0.167px;">01 Bewerbungsunterlagen</div>
<div class="t" style="left:719.60px;top:488.15px;font-size:14px;line-height:14px;color:#262626;font-weight:normal;letter-spacing:0.238px;">Ordner</div>
<div class="t" style="left:818.30px;top:488.15px;font-size:14px;line-height:14px;color:#262626;font-weight:normal;letter-spacing:-0.170px;">13.01.16 - 15:30:55</div>
<div style="left:250px;top:512px;width:896px;height:36px;background:#eff0f2"></div>
<div style="left:250px;top:548px;width:896px;height:1px;background:#cfd3d6;z-index:1"></div>
<svg style="left:265px;top:525px" width="15" height="14" viewBox="0 0 24 23"><path d="M12 1.5 L15 8.3 L22.5 9 L16.8 14 L18.5 21.3 L12 17.5 L5.5 21.3 L7.2 14 L1.5 9 L9 8.3 Z" fill="none" stroke="#c48a1c" stroke-width="2.2" stroke-linejoin="round"/></svg>
<svg style="left:286px;top:526px" width="15" height="11" viewBox="0 0 15 11" preserveAspectRatio="none"><path d="M0 1 Q0 0 1 0 H6.3 L7.6 2 H14 Q15 2 15 3 V10 Q15 11 14 11 H1 Q0 11 0 10 Z" fill="#014253"/></svg>
<div class="t" style="left:304.80px;top:524.15px;font-size:14px;line-height:14px;color:#262626;font-weight:normal;letter-spacing:0.229px;">02 Arbeitsvertrag</div>
<div class="t" style="left:719.60px;top:524.15px;font-size:14px;line-height:14px;color:#262626;font-weight:normal;letter-spacing:0.238px;">Ordner</div>
<div class="t" style="left:818.30px;top:524.15px;font-size:14px;line-height:14px;color:#262626;font-weight:normal;letter-spacing:-0.170px;">13.01.16 - 15:30:55</div>
<div style="left:250px;top:548px;width:896px;height:36px;background:#fff"></div>
<div style="left:250px;top:584px;width:896px;height:1px;background:#cfd3d6;z-index:1"></div>
<svg style="left:265px;top:561px" width="15" height="14" viewBox="0 0 24 23"><path d="M12 1.5 L15 8.3 L22.5 9 L16.8 14 L18.5 21.3 L12 17.5 L5.5 21.3 L7.2 14 L1.5 9 L9 8.3 Z" fill="none" stroke="#c48a1c" stroke-width="2.2" stroke-linejoin="round"/></svg>
<svg style="left:286px;top:562px" width="15" height="11" viewBox="0 0 15 11" preserveAspectRatio="none"><path d="M0 1 Q0 0 1 0 H6.3 L7.6 2 H14 Q15 2 15 3 V10 Q15 11 14 11 H1 Q0 11 0 10 Z" fill="#014253"/></svg>
<div class="t" style="left:304.80px;top:560.15px;font-size:14px;line-height:14px;color:#262626;font-weight:normal;letter-spacing:0.053px;">03 Belehrungen</div>
<div class="t" style="left:719.60px;top:560.15px;font-size:14px;line-height:14px;color:#262626;font-weight:normal;letter-spacing:0.238px;">Ordner</div>
<div class="t" style="left:818.30px;top:560.15px;font-size:14px;line-height:14px;color:#262626;font-weight:normal;letter-spacing:-0.170px;">13.01.16 - 15:30:55</div>
<div style="left:250px;top:584px;width:896px;height:36px;background:#eff0f2"></div>
<div style="left:250px;top:620px;width:896px;height:1px;background:#cfd3d6;z-index:1"></div>
<svg style="left:265px;top:597px" width="15" height="14" viewBox="0 0 24 23"><path d="M12 1.5 L15 8.3 L22.5 9 L16.8 14 L18.5 21.3 L12 17.5 L5.5 21.3 L7.2 14 L1.5 9 L9 8.3 Z" fill="none" stroke="#c48a1c" stroke-width="2.2" stroke-linejoin="round"/></svg>
<svg style="left:286px;top:598px" width="15" height="11" viewBox="0 0 15 11" preserveAspectRatio="none"><path d="M0 1 Q0 0 1 0 H6.3 L7.6 2 H14 Q15 2 15 3 V10 Q15 11 14 11 H1 Q0 11 0 10 Z" fill="#014253"/></svg>
<div class="t" style="left:304.80px;top:596.15px;font-size:14px;line-height:14px;color:#262626;font-weight:normal;letter-spacing:0.091px;">04 Aus- und Weiterbildung</div>
<div class="t" style="left:719.60px;top:596.15px;font-size:14px;line-height:14px;color:#262626;font-weight:normal;letter-spacing:0.238px;">Ordner</div>
<div class="t" style="left:818.30px;top:596.15px;font-size:14px;line-height:14px;color:#262626;font-weight:normal;letter-spacing:-0.170px;">13.01.16 - 15:30:55</div>
<div style="left:250px;top:620px;width:896px;height:36px;background:#fff"></div>
<div style="left:250px;top:656px;width:896px;height:1px;background:#cfd3d6;z-index:1"></div>
<svg style="left:265px;top:633px" width="15" height="14" viewBox="0 0 24 23"><path d="M12 1.5 L15 8.3 L22.5 9 L16.8 14 L18.5 21.3 L12 17.5 L5.5 21.3 L7.2 14 L1.5 9 L9 8.3 Z" fill="none" stroke="#c48a1c" stroke-width="2.2" stroke-linejoin="round"/></svg>
<svg style="left:286px;top:634px" width="15" height="11" viewBox="0 0 15 11" preserveAspectRatio="none"><path d="M0 1 Q0 0 1 0 H6.3 L7.6 2 H14 Q15 2 15 3 V10 Q15 11 14 11 H1 Q0 11 0 10 Z" fill="#014253"/></svg>
<div class="t" style="left:304.80px;top:632.15px;font-size:14px;line-height:14px;color:#262626;font-weight:normal;letter-spacing:0.182px;">05 Arbeitsunfähigkeit - Krankheit - Unfall</div>
<div class="t" style="left:719.60px;top:632.15px;font-size:14px;line-height:14px;color:#262626;font-weight:normal;letter-spacing:0.238px;">Ordner</div>
<div class="t" style="left:818.30px;top:632.15px;font-size:14px;line-height:14px;color:#262626;font-weight:normal;letter-spacing:-0.170px;">13.01.16 - 15:30:55</div>
<div style="left:250px;top:656px;width:896px;height:36px;background:#eff0f2"></div>
<div style="left:250px;top:692px;width:896px;height:1px;background:#cfd3d6;z-index:1"></div>
<svg style="left:265px;top:669px" width="15" height="14" viewBox="0 0 24 23"><path d="M12 1.5 L15 8.3 L22.5 9 L16.8 14 L18.5 21.3 L12 17.5 L5.5 21.3 L7.2 14 L1.5 9 L9 8.3 Z" fill="none" stroke="#c48a1c" stroke-width="2.2" stroke-linejoin="round"/></svg>
<svg style="left:287px;top:667px" width="12" height="16" viewBox="0 0 12 16"><path d="M0.6 0.6 H8 L11.4 4 V15.4 H0.6 Z" fill="#fff" stroke="#2b5b93" stroke-width="1.2"/><path d="M3 7 L4.3 12 L6 8 L7.7 12 L9 7" fill="none" stroke="#2b5b93" stroke-width="1"/></svg>
<div class="t" style="left:304.80px;top:668.15px;font-size:14px;line-height:14px;color:#262626;font-weight:normal;letter-spacing:0.260px;">Mitarbeitervertrag FB.docx</div>
<div class="t" style="left:675.40px;top:668.15px;font-size:14px;line-height:14px;color:#262626;font-weight:normal;letter-spacing:-0.368px;">12 KB</div>
<div class="t" style="left:719.60px;top:668.15px;font-size:14px;line-height:14px;color:#262626;font-weight:normal;letter-spacing:-0.159px;">DOCX-Datei</div>
<div class="t" style="left:818.30px;top:668.15px;font-size:14px;line-height:14px;color:#262626;font-weight:normal;letter-spacing:-0.170px;">07.01.16 - 17:43:20</div>
<div class="t" style="left:992.70px;top:668.15px;font-size:14px;line-height:14px;color:#262626;font-weight:normal;letter-spacing:0.024px;">Draht, Thomas</div>
<div style="left:250px;top:713px;width:896px;height:13px;background:#fafafa"></div>
<svg style="left:254px;top:717px" width="7" height="9"><polygon points="6,0 6,9 0,4.5" fill="#777"/></svg>
<svg style="left:1137px;top:717px" width="7" height="9"><polygon points="0,0 0,9 6,4.5" fill="#777"/></svg>
<div style="left:268px;top:717px;width:582px;height:9px;background:#8a8a8a;border-radius:4.5px"></div>
<div style="left:251px;top:574.0px;width:3px;height:2px;background:#bbb;border-radius:1px"></div>
<div style="left:251px;top:577.5px;width:3px;height:2px;background:#bbb;border-radius:1px"></div>
<div style="left:251px;top:581.0px;width:3px;height:2px;background:#bbb;border-radius:1px"></div>
<div style="left:251px;top:584.5px;width:3px;height:2px;background:#bbb;border-radius:1px"></div>
<div style="left:0px;top:0px;width:1148px;height:1px;background:#333"></div>
<div style="left:0px;top:0px;width:2px;height:728px;background:#0f5353"></div>
<div style="left:1146px;top:0px;width:2px;height:728px;background:#0f5353"></div>
<div style="left:0px;top:726px;width:1148px;height:2px;background:#0f5353"></div>
</body></html>
